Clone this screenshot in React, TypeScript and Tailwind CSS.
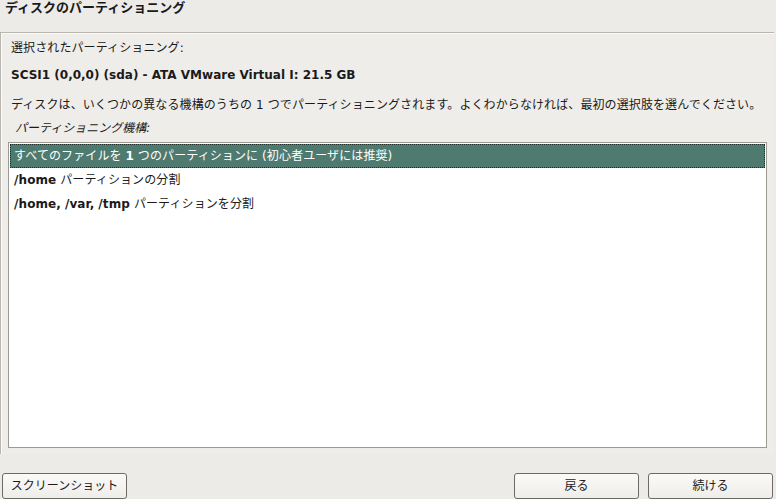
const FONT = "font-['DejaVu_Sans','Noto_Sans_CJK_JP',sans-serif]";

const OPTIONS = [
  { id: 1, text: "すべてのファイルを 1 つのパーティションに (初心者ユーザには推奨)" },
  { id: 2, text: "/home パーティションの分割" },
  { id: 3, text: "/home, /var, /tmp パーティションを分割" },
];

function Button({ label, className }: { label: string; className?: string }) {
  return (
    <button
      className={`h-[26px] w-[125px] rounded-[3px] border border-[#6d6a64] bg-gradient-to-b from-[#fbfaf9] to-[#efedea] text-[12px] text-[#1a1a1a] ${className ?? ""}`}
    >
      {label}
    </button>
  );
}

export default function App() {
  const selected = 1;
  return (
    <div className={`flex h-[499px] w-[776px] flex-col overflow-hidden bg-[#edebe8] ${FONT}`}>
      <h1 className="h-[32px] px-[5px] pt-[1px] text-[13px] font-bold leading-[14px] text-[#1a1a1a]">
        ディスクのパーティショニング
      </h1>

      <div className="mr-[2px] flex h-[422px] flex-col border-t border-l border-[#b9b6b0] bg-[#efedea] px-[7px] shadow-[inset_1px_1px_0_#fbfaf9]">
        <p className="mt-[8px] pl-[3px] text-[12px] leading-[15px] tracking-[0.1px] text-[#1a1a1a]">
          選択されたパーティショニング:
        </p>
        <p className="mt-[12px] pl-[3px] text-[12px] font-bold leading-[15px] text-[#1a1a1a]">
          SCSI1 (0,0,0) (sda) - ATA VMware Virtual I: 21.5 GB
        </p>
        <p className="mt-[15px] pl-[3px] text-[12px] leading-[15px] tracking-[0.1px] text-[#1a1a1a]">
          ディスクは、いくつかの異なる機構のうちの 1 つでパーティショニングされます。よくわからなければ、最初の選択肢を選んでください。
        </p>
        <p className="mt-[8px] pl-[7px] text-[12px] italic leading-[15px] text-[#1a1a1a]">
          パーティショニング機構:
        </p>

        <ul className="mt-[6px] h-[306px] border border-[#9d9a94] bg-white p-[1px]">
          {OPTIONS.map((o) => (
            <li
              key={o.id}
              className={`flex h-[24px] items-center px-[3px] text-[12px] tracking-[0.1px] ${
                o.id === selected
                  ? "border border-dotted border-[#1f2d29] bg-[#4f7a6f] text-white"
                  : "border border-transparent text-[#1a1a1a]"
              }`}
            >
              <span className="whitespace-pre">
                {o.text.split(/(\/[a-z]+,?|\b1\b)/).map((part, i) =>
                  /^\/[a-z]+,?$|^1$/.test(part) ? <b key={i}>{part}</b> : part,
                )}
              </span>
            </li>
          ))}
        </ul>
      </div>

      <div className="mt-[19px] flex items-center px-[2px]">
        <Button label="スクリーンショット" />
        <div className="flex-1" />
        <Button label="戻る" />
        <Button label="続ける" className="ml-[9px] mr-[1px]" />
      </div>
    </div>
  );
}
